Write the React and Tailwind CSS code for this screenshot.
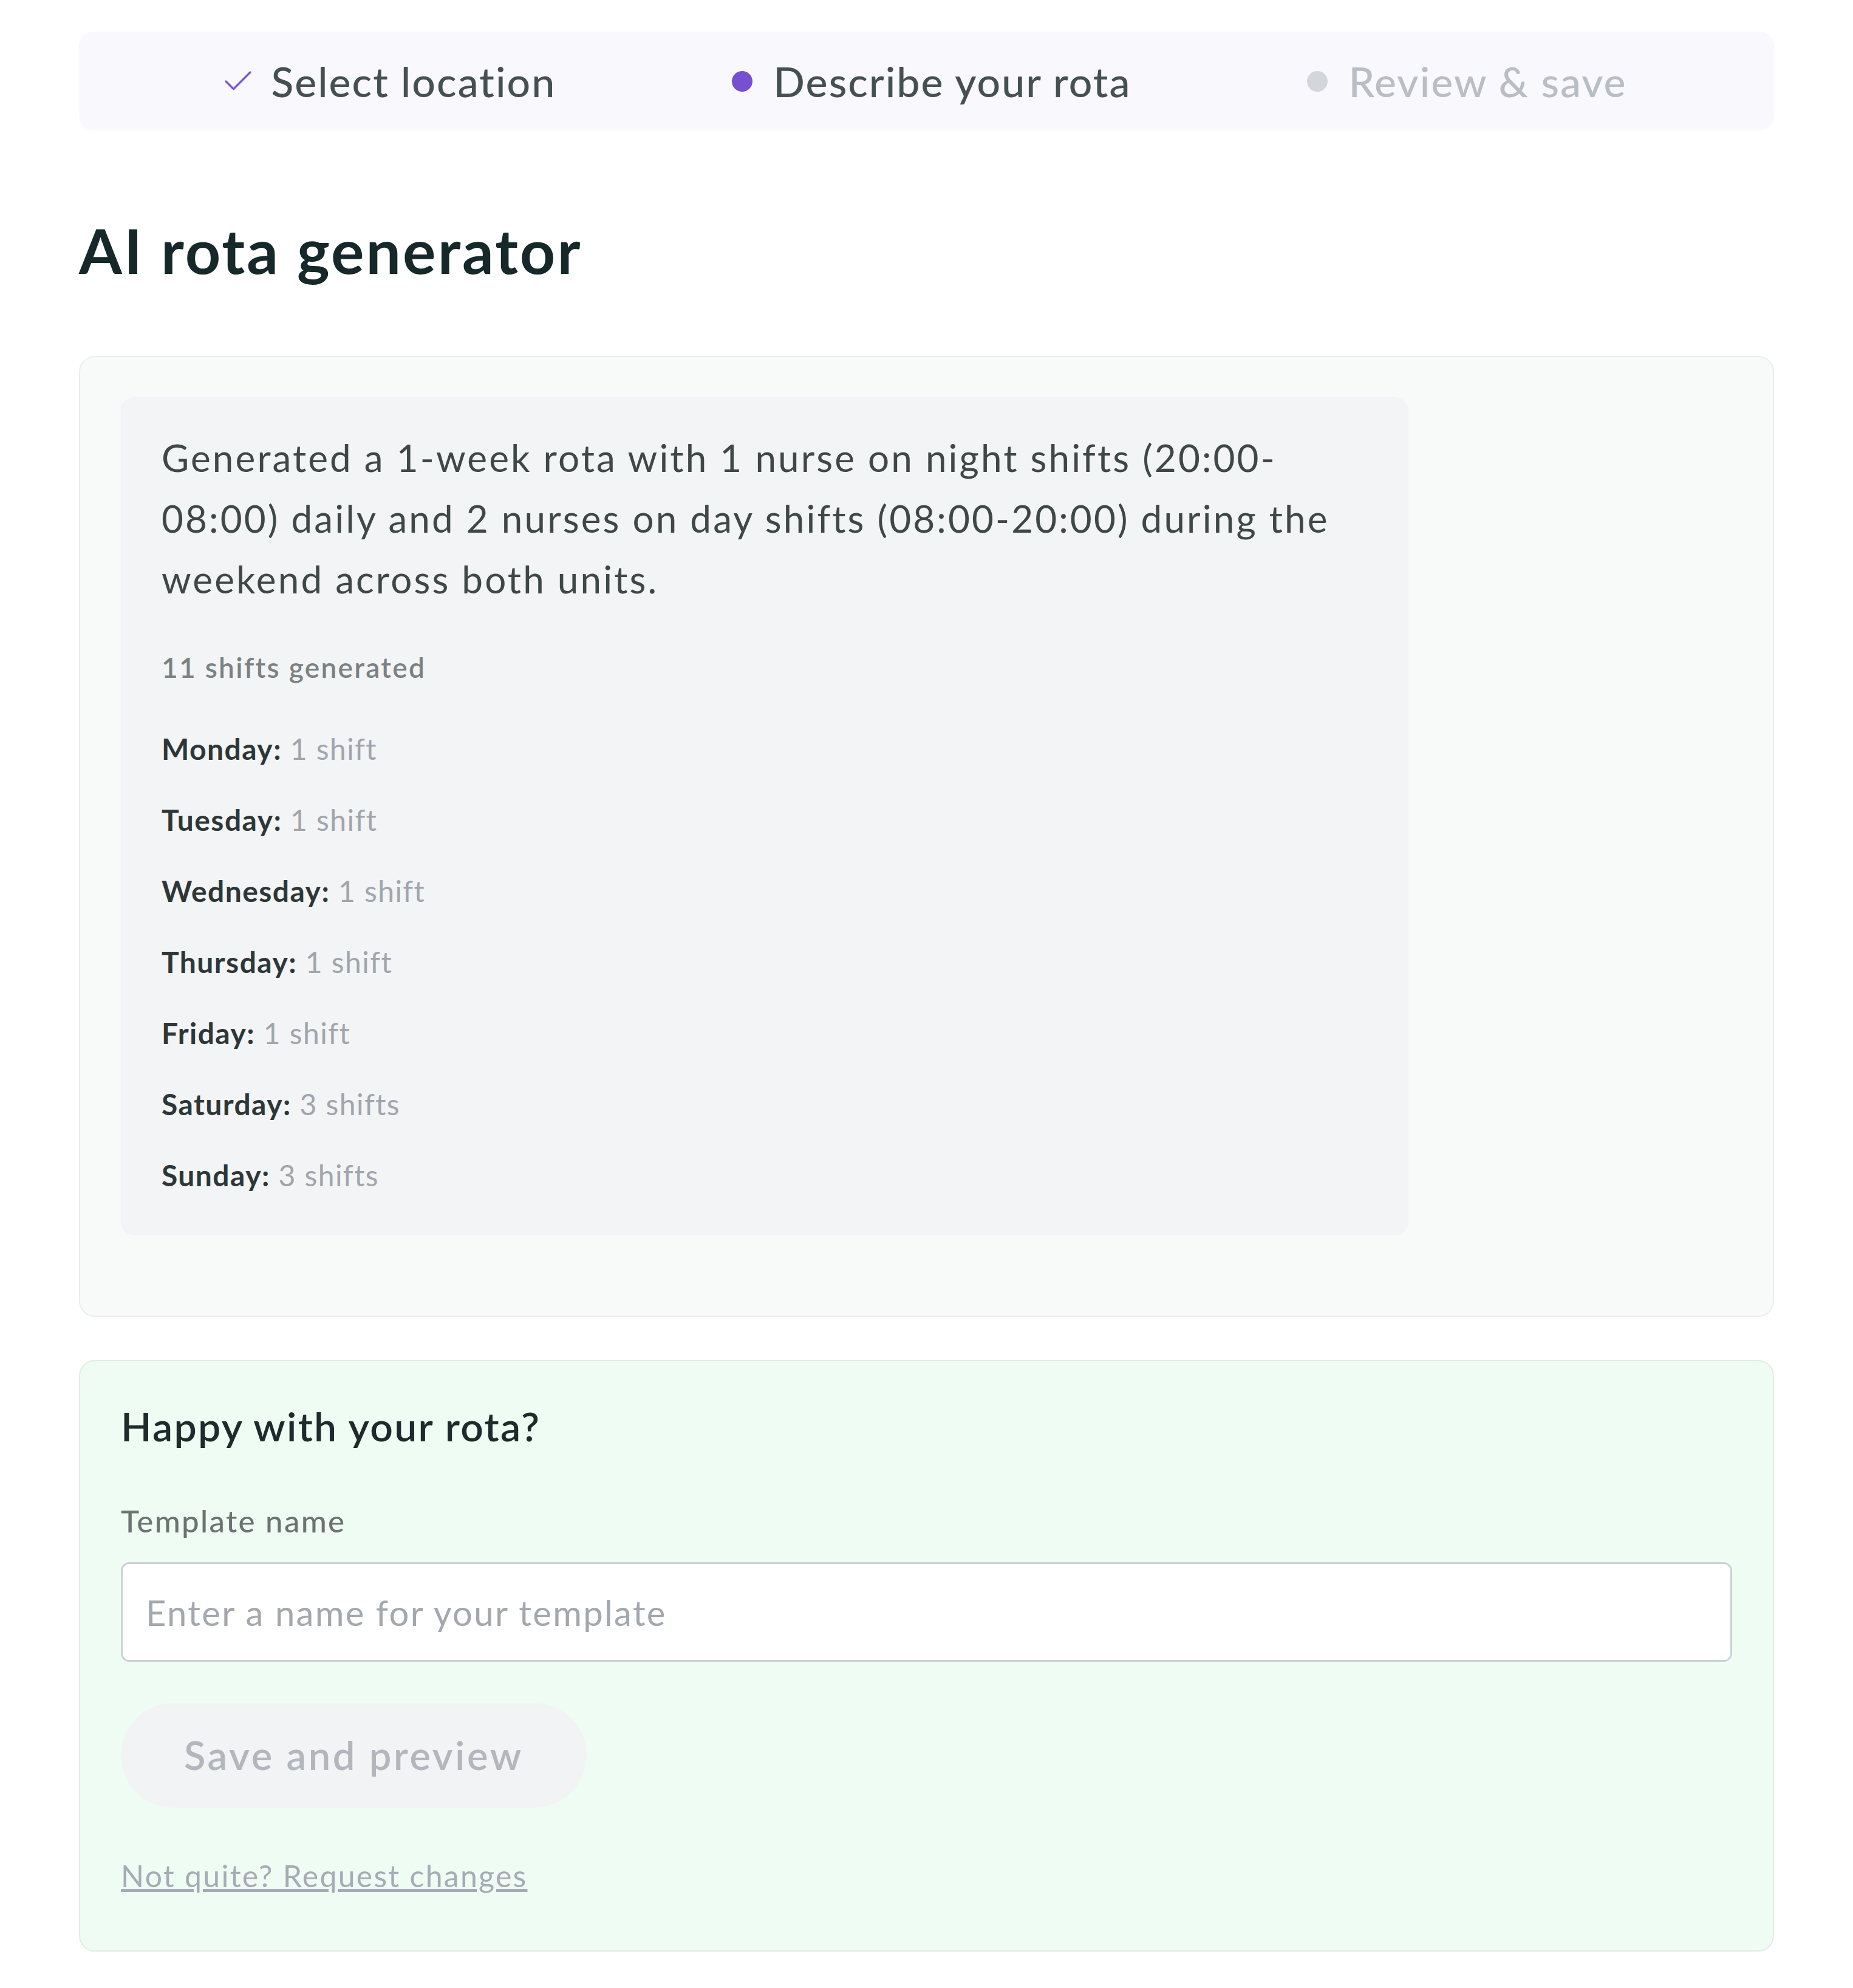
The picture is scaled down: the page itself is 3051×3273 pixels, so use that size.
import { Check } from 'lucide-react';

const steps = [
  { label: 'Select location', state: 'done' },
  { label: 'Describe your rota', state: 'current' },
  { label: 'Review & save', state: 'todo' },
];

const days = [
  { day: 'Monday', count: '1 shift' },
  { day: 'Tuesday', count: '1 shift' },
  { day: 'Wednesday', count: '1 shift' },
  { day: 'Thursday', count: '1 shift' },
  { day: 'Friday', count: '1 shift' },
  { day: 'Saturday', count: '3 shifts' },
  { day: 'Sunday', count: '3 shifts' },
];

function StepMarker({ state }) {
  if (state === 'done') {
    return <Check className="w-[60px] h-[60px] -mx-[10px] text-[#7a55d4]" strokeWidth={1.3} />;
  }
  if (state === 'current') {
    return <span className="block w-[34px] h-[34px] rounded-full bg-[#7650d1]" />;
  }
  return <span className="block w-[34px] h-[34px] rounded-full bg-[#d3d6db]" />;
}

export default function App() {
  return (
    <div className="min-h-[3273px] bg-white font-['Lato',sans-serif] px-[130px] pt-[52px]">
      {/* Stepper */}
      <div className="h-[163px] rounded-[24px] bg-[#f9f9fd] flex items-center justify-center gap-[290px]">
        {steps.map((s) => (
          <div key={s.label} className="flex items-center gap-[34px]">
            <StepMarker state={s.state} />
            <span
              className={`text-[68px] leading-[80px] font-medium tracking-[0.03em] ${
                s.state === 'todo' ? 'text-[#babec4]' : 'text-[#475050]'
              }`}
            >
              {s.label}
            </span>
          </div>
        ))}
      </div>

      <h1 className="mt-[137px] text-[102px] leading-[120px] font-bold tracking-[0.03em] text-[#162829]">
        AI rota generator
      </h1>

      {/* Result card */}
      <div className="mt-[114px] rounded-[26px] border-2 border-[#eceeee] bg-[#f8f9f9] pt-[66px] pl-[67px] pr-[600px] pb-[132px]">
        <div className="rounded-[22px] bg-[#f3f4f6] pt-[49px] px-[67px] pb-[69px]">
          <p className="text-[62px] leading-[100px] tracking-[0.05em] text-[#3f4747]">
            Generated a 1-week rota with 1 nurse on night shifts (20:00-08:00) daily and 2 nurses on day shifts
            (08:00-20:00) during the weekend across both units.
          </p>
          <p className="mt-[66px] text-[46px] leading-[60px] font-semibold tracking-[0.05em] text-[#7b8282]">
            11 shifts generated
          </p>
          <ul className="mt-[74px] flex flex-col gap-[57px]">
            {days.map((d) => (
              <li key={d.day} className="text-[48px] leading-[60px] tracking-[0.03em]">
                <span className="font-bold text-[#2e3737]">{d.day}:</span>{' '}
                <span className="text-[#a1a5ab]">{d.count}</span>
              </li>
            ))}
          </ul>
        </div>
      </div>

      {/* Save card */}
      <div className="mt-[71px] rounded-[26px] border-2 border-[#e3ece6] bg-[#effcf3] pt-[72px] px-[67px] pb-[93px]">
        <h2 className="text-[66px] leading-[70px] font-semibold tracking-[0.035em] text-[#1e2b2b]">
          Happy with your rota?
        </h2>
        <label className="block mt-[91px] text-[51px] leading-[60px] font-medium tracking-[0.045em] text-[#6d7373]">
          Template name
        </label>
        <input
          type="text"
          placeholder="Enter a name for your template"
          className="mt-[38px] block w-full h-[164px] rounded-[14px] border-[3px] border-[#cdd0d9] bg-white px-[38px] text-[58px] tracking-[0.04em] text-[#333] placeholder:text-[#a3a7ae] outline-none"
        />
        <button
          type="button"
          disabled
          className="mt-[68px] h-[172px] px-[104px] rounded-full bg-[#f2f3f5] text-[65px] font-semibold tracking-[0.055em] text-[#b3b6bd]"
        >
          Save and preview
        </button>
        <div className="mt-[82px]">
          <a href="#" className="text-[50px] leading-[60px] tracking-[0.045em] underline text-[#a6abb5]">
            Not quite? Request changes
          </a>
        </div>
      </div>
    </div>
  );
}
